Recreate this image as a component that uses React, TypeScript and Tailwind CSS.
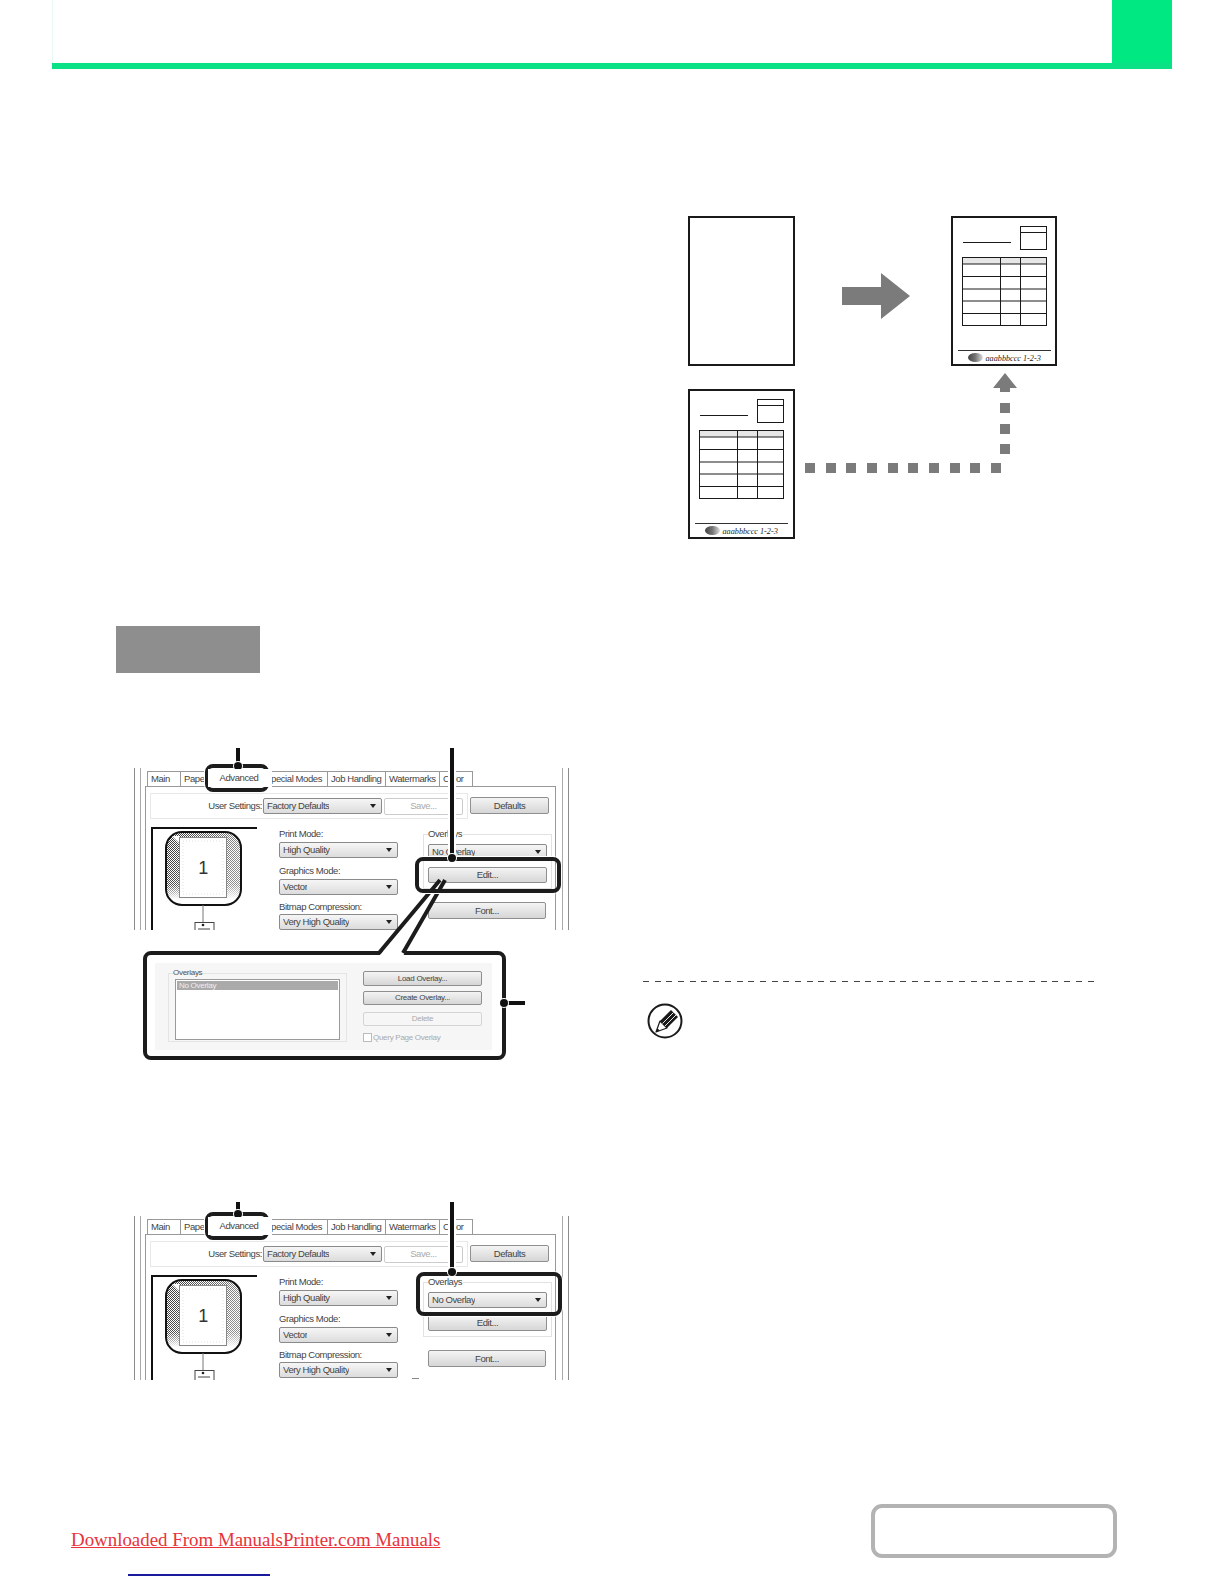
const selectCls =
  "flex items-center justify-between h-[16px] border border-[#8a8a8a] rounded-[2px] bg-linear-to-b from-[#f6f6f6] to-[#dcdcdc] pl-[3px] pr-[5px] text-[#444]";
const buttonCls =
  "flex items-center justify-center border border-[#8f8f8f] rounded-[2px] bg-linear-to-b from-[#f4f4f4] to-[#d6d6d6] text-[#444]";
const highlightCls = "absolute border-[4px] border-[#1c1c1c] rounded-[8px] shadow-[0_0_0_1px_white]";

function Caret() {
  return <span className="w-0 h-0 border-x-[3.5px] border-x-transparent border-t-[4px] border-t-[#222]" />;
}

function Select({ label, className = "" }: { label: string; className?: string }) {
  return (
    <div className={`${selectCls} ${className}`}>
      <span className="truncate">{label}</span>
      <Caret />
    </div>
  );
}

function Preview({ id }: { id: string }) {
  return (
    <svg viewBox="0 0 104 103" className="w-[104px] h-[103px] block">
      <defs>
        <pattern id={`${id}-hatch`} width="2" height="2" patternUnits="userSpaceOnUse">
          <rect width="2" height="2" fill="#fff" />
          <rect width="1" height="1" fill="#333" />
          <rect x="1" y="1" width="1" height="1" fill="#333" />
        </pattern>
        <linearGradient id={`${id}-fade`} x1="0" x2="1" y1="0" y2="0.35">
          <stop offset="0" stopColor="#fff" stopOpacity="0" />
          <stop offset="1" stopColor="#fff" stopOpacity="0.45" />
        </linearGradient>
        <linearGradient id={`${id}-low`} x1="0" x2="0" y1="0" y2="1">
          <stop offset="0.72" stopColor="#fff" stopOpacity="0" />
          <stop offset="0.92" stopColor="#fff" stopOpacity="1" />
        </linearGradient>
      </defs>
      <rect x="13" y="3" width="75" height="73" rx="16" fill={`url(#${id}-hatch)`} />
      <rect x="13" y="3" width="75" height="73" rx="16" fill={`url(#${id}-fade)`} />
      <rect x="13" y="3" width="75" height="73" rx="16" fill={`url(#${id}-low)`} />
      <rect x="13" y="3" width="75" height="73" rx="16" fill="none" stroke="#111" strokeWidth="2" />
      <path d="M19 7 L26 7 L26 14 Z" fill="#fff" />
      <rect x="26.5" y="8.5" width="47" height="60" fill="#fff" stroke="#888" strokeWidth="1" />
      <rect x="30" y="12" width="40" height="53" fill="none" stroke="#ccc" strokeWidth="0.6" strokeDasharray="1 2" />
      <text x="50" y="45" textAnchor="middle" fontFamily="'Liberation Sans', sans-serif" fontSize="18" fill="#333">
        1
      </text>
      <path d="M50 76 V93" stroke="#777" strokeWidth="1" />
      <rect x="42" y="93.5" width="19" height="14" fill="#fff" stroke="#444" strokeWidth="1" />
      <circle cx="50" cy="96" r="1.3" fill="#222" />
      <path d="M45 100 H57" stroke="#444" strokeWidth="1" />
    </svg>
  );
}

function DriverWindow({ id, className }: { id: string; className: string }) {
  const tabs: [string, string][] = [
    ["Main", "w-[33px]"],
    ["Paper", "w-[34px]"],
  ];
  const tabsAfter: [string, string][] = [
    ["Special Modes", "w-[64px]"],
    ["Job Handling", "w-[58px]"],
    ["Watermarks", "w-[54px]"],
    ["Color", "w-[33px]"],
  ];
  return (
    <div className={`${className} overflow-hidden border-x border-[#8c8c8c] px-[5px] text-[9.5px] tracking-[-0.42px] leading-none text-[#444]`}>
      <div className="h-full border-x border-[#aaa] pl-[4px] pr-[6px] pt-[3px]">
        <div className="flex h-[15px] ml-[2px]">
          {tabs.map(([t, w]) => (
            <div key={t} className={`${w} h-full border-t border-l border-[#999] flex items-center pl-[3px] overflow-hidden whitespace-nowrap`}>
              {t}
            </div>
          ))}
          <div className="relative z-10 -ml-[6px] -mt-[2px] w-[64px] h-[18px] bg-white pr-[2px] flex items-center justify-center">Advanced</div>
          {tabsAfter.map(([t, w], i) => (
            <div
              key={t}
              className={`${w} h-full border-t border-r border-[#999] flex items-center whitespace-nowrap overflow-hidden ${i === 0 ? "-ml-[8px] justify-end pr-[5px]" : "pl-[3px]"}`}
            >
              {t}
            </div>
          ))}
        </div>
        <div className="h-[160px] border border-[#999] border-b-0">
          <div className="flex mt-[6px] ml-[4px]">
            <div className="w-[318px] h-[26px] border border-[#e8e8e8] flex items-center justify-end pr-[4px]">
              <span className="mr-[1px]">User Settings:</span>
              <Select label="Factory Defaults" className="w-[119px]" />
              <div className="ml-[2px] w-[79px] h-[17px] border border-[#ccc] rounded-[2px] flex items-center justify-center text-[#aaa]">Save...</div>
            </div>
            <div className={`${buttonCls} ml-[2px] mt-[4px] w-[79px] h-[17px]`}>Defaults</div>
          </div>
          <div className="flex mt-[8px] ml-[5px]">
            <div className="w-[106px] h-[110px] border-l-2 border-t-2 border-[#111] overflow-hidden">
              <Preview id={id} />
            </div>
            <div className="ml-[22px] w-[119px]">
              <div className="h-[14px] flex items-center">Print Mode:</div>
              <Select label="High Quality" className="mt-[1px]" />
              <div className="h-[14px] flex items-center mt-[6px]">Graphics Mode:</div>
              <Select label="Vector" className="mt-[1px]" />
              <div className="h-[14px] flex items-center mt-[5px]">Bitmap Compression:</div>
              <Select label="Very High Quality" />
            </div>
            <div className="ml-[25px] w-[129px]">
              <div className="relative mt-[7px] h-[55px] border border-[#e2e2e2] pl-[4px] pr-[4px]">
                <span className="absolute left-[4px] -top-[6px] bg-white pr-[1px]">Overlays</span>
                <Select label="No Overlay" className="mt-[9px]" />
                <div className={`${buttonCls} mt-[7px] h-[16px]`}>Edit...</div>
              </div>
              <div className={`${buttonCls} mt-[13px] ml-[5px] w-[118px] h-[17px]`}>Font...</div>
            </div>
          </div>
        </div>
      </div>
    </div>
  );
}

function OverlayPanel() {
  return (
    <div className="ml-[9px] mt-[21px] w-[363px] h-[109px] border-[4px] border-[#1c1c1c] rounded-[8px] pl-[8px] pt-[8px] text-[8px] tracking-[-0.28px] leading-none text-[#555]">
      <div className="w-[337px] h-[87px] bg-[#f6f6f6] flex pl-[13px] pt-[8px]">
        <div className="relative mt-[2px] w-[179px] h-[69px] border border-[#e4e4e4] pl-[6px] pt-[5px]">
          <span className="absolute left-[4px] -top-[5px]">Overlays</span>
          <div className="w-[165px] h-[61px] border border-[#9a9a9a] bg-white p-px">
            <div className="h-[9px] bg-[#aaa] text-[#eee] pl-[2px] flex items-center">No Overlay</div>
          </div>
        </div>
        <div className="ml-[16px] w-[119px]">
          <div className={`${buttonCls} h-[15px]`}>Load Overlay...</div>
          <div className={`${buttonCls} mt-[5px] h-[14px]`}>Create Overlay...</div>
          <div className="mt-[7px] h-[14px] border border-[#d4d4d4] rounded-[2px] flex items-center justify-center text-[#aaa]">Delete</div>
          <div className="mt-[7px] flex items-center text-[#aaa]">
            <span className="w-[9px] h-[9px] border border-[#bbb] bg-white mr-[1px]" />
            Query Page Overlay
          </div>
        </div>
      </div>
    </div>
  );
}

function Dot({ className }: { className: string }) {
  return <div className={`absolute w-[8px] h-[8px] rounded-full bg-[#111] shadow-[0_0_0_1px_white] ${className}`} />;
}

function DocPage({ dx, dy, w, filled, id }: { dx: number; dy: number; w: number; filled: boolean; id: string }) {
  return (
    <g transform={`translate(${dx} ${dy})`}>
      <rect x="9" y="17" width={w} height="148" fill="#fff" stroke="#1a1a1a" strokeWidth="2" />
      {filled && (
        <g stroke="#1a1a1a" strokeWidth="1" fill="none">
          <defs>
            <linearGradient id={id} x1="0" x2="1" y1="0" y2="0">
              <stop offset="0" stopColor="#444" />
              <stop offset="0.5" stopColor="#777" />
              <stop offset="1" stopColor="#ddd" />
            </linearGradient>
          </defs>
          <path d="M20 42.5 H68" />
          <rect x="77.5" y="26.5" width="26" height="23" />
          <path d="M77.5 32.5 H103.5" />
          <rect x="19.5" y="57.5" width="84" height="6.5" fill="#e6e6e6" />
          <rect x="19.5" y="57.5" width="84" height="68" />
          <path d="M19.5 76.5 H103.5 M19.5 89 H103.5 M19.5 101 H103.5 M19.5 113.5 H103.5 M57.5 57.5 V125.5 M77.5 57.5 V125.5" />
          <path d="M15 150.5 H108" strokeWidth="0.9" />
          <ellipse cx="32.5" cy="157.5" rx="7.5" ry="4.5" fill={`url(#${id})`} stroke="none" />
          <text
            x="42.5"
            y="160.5"
            fontFamily="'Liberation Serif', serif"
            fontStyle="italic"
            fontSize="8.2"
            fill="#222"
            stroke="none"
          >
            aaabbbccc 1-2-3
          </text>
        </g>
      )}
    </g>
  );
}

function Diagram() {
  const across = [125, 146, 166, 187, 208, 228, 249, 270, 290, 311];
  const up = [203, 224, 244];
  return (
    <svg viewBox="0 0 400 350" className="block w-[400px] h-[350px] ml-[37px]">
      <DocPage id="logo-a" dx={0} dy={0} w={105} filled={false} />
      <DocPage id="logo-b" dx={263} dy={0} w={104} filled />
      <DocPage id="logo-c" dx={0} dy={173} w={105} filled />
      <path d="M162 87 H201 V73 L230 96 L201 119 V105 H162 Z" fill="#7b7b7b" />
      <path d="M325 173 L337 188 H330 V192 H320 V188 H313 Z" fill="#7b7b7b" />
      {up.map((y) => (
        <rect key={y} x="320" y={y} width="10" height="10" fill="#7b7b7b" />
      ))}
      {across.map((x) => (
        <rect key={x} x={x} y="263" width="10" height="10" fill="#7b7b7b" />
      ))}
    </svg>
  );
}

function PencilIcon() {
  return (
    <svg viewBox="0 0 36 36" className="block w-[36px] h-[36px] ml-[4px] mt-[21px]">
      <circle cx="18" cy="18" r="16.5" fill="#fff" stroke="#1a1a1a" strokeWidth="2" />
      <path d="M13 18 L24 7 L31 14 L20 25 Z" fill="#1a1a1a" />
      <path d="M9 29 L13 18 L20 25 Z" fill="#fff" stroke="#1a1a1a" strokeWidth="1.2" strokeLinejoin="round" />
      <path d="M9 29 L10.4 25.2 L12.8 27.6 Z" fill="#1a1a1a" />
      <path d="M15.5 20.5 L26.5 9.5 M18 23 L29 12" stroke="#fff" strokeWidth="0.9" />
    </svg>
  );
}

export default function App() {
  return (
    <div className="w-[1224px] h-[1584px] bg-white overflow-hidden flex flex-col font-['Liberation_Sans',sans-serif]">
      <header className="ml-[52px] w-[1120px] shrink-0">
        <div className="flex h-[63px] justify-end border-l border-[#e6faf2]">
          <div className="w-[60px] bg-[#00e882]" />
        </div>
        <div className="h-[6px] bg-[#0ae285]" />
      </header>

      <main className="flex flex-1 min-h-0">
        <section className="ml-[116px] w-[527px] shrink-0">
          <div className="mt-[557px] w-[144px] h-[47px] bg-[#8e8e8e]" />

          <div className="relative ml-[18px] mt-[75px] w-[435px] pt-[20px]">
            <DriverWindow id="a" className="h-[162px]" />
            <OverlayPanel />
            <svg viewBox="0 0 435 225" className="absolute left-0 top-0 w-[435px] h-[225px] pointer-events-none">
              <path d="M245 208 L306 132 L311 132 L269 208 Z" fill="#fff" />
              <path d="M245 205 L306 132 M269 205 L311 132" stroke="#1c1c1c" strokeWidth="4" fill="none" />
            </svg>
            <div className={`${highlightCls} left-[71px] top-[16px] w-[64px] h-[28px]`} />
            <div className={`${highlightCls} left-[281px] top-[109px] w-[146px] h-[36px]`} />
            <div className="absolute left-[102px] top-0 w-[4px] h-[16px] bg-[#111]" />
            <Dot className="left-[100px] top-[14px]" />
            <div className="absolute left-[316px] top-0 w-[4px] h-[110px] bg-[#111] shadow-[0_0_0_2px_white]" />
            <Dot className="left-[314px] top-[106px]" />
            <div className="absolute left-[370px] top-[253px] w-[21px] h-[4px] bg-[#111]" />
            <Dot className="left-[366px] top-[251px]" />
          </div>

          <div className="relative ml-[18px] mt-[136px] w-[435px] pt-[20px]">
            <DriverWindow id="b" className="h-[164px]" />
            <div className={`${highlightCls} left-[71px] top-[16px] w-[64px] h-[28px]`} />
            <div className={`${highlightCls} left-[282px] top-[76px] w-[146px] h-[44px]`} />
            <div className="absolute left-[102px] top-[6px] w-[4px] h-[10px] bg-[#111]" />
            <Dot className="left-[100px] top-[14px]" />
            <div className="absolute left-[316px] top-[6px] w-[4px] h-[70px] bg-[#111] shadow-[0_0_0_2px_white]" />
            <Dot className="left-[314px] top-[72px]" />
            <div className="absolute left-[278px] top-[182px] w-[7px] h-px bg-[#888]" />
          </div>
        </section>

        <section className="w-[460px] shrink-0">
          <div className="mt-[131px]">
            <Diagram />
          </div>
          <div className="mt-[431px] w-[455px] h-px bg-[repeating-linear-gradient(90deg,#444_0_6px,transparent_6px_11.7px)]" />
          <PencilIcon />
        </section>
      </main>

      <footer className="h-[80px] shrink-0 flex justify-between">
        <div className="ml-[71px] pt-[25px] flex flex-col">
          <a className="font-['Liberation_Serif',serif] text-[18.9px] leading-[22px] text-[#e8333a] underline whitespace-nowrap">
            Downloaded From ManualsPrinter.com Manuals
          </a>
          <div className="ml-[57px] mt-[23px] w-[142px] h-[2px] bg-[#1a1a9c]" />
        </div>
        <div className="mr-[107px] w-[246px] h-[54px] border-[4px] border-[#b3b3b3] rounded-[11px]" />
      </footer>
    </div>
  );
}
